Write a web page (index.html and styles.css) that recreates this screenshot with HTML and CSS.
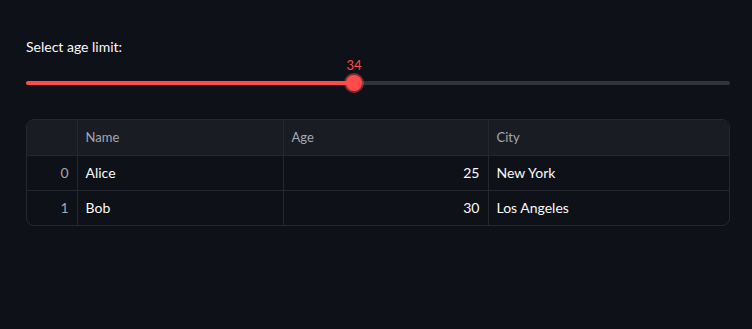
FILE: index.html
```html
<!DOCTYPE html>
<html lang="en">
<head>
    <meta charset="UTF-8">
    <meta name="viewport" content="width=device-width, initial-scale=1.0">
    <title>Age filter</title>
    <link rel="stylesheet" href="styles.css">
</head>
<body>
    <div class="main">
        <div class="slider-block">
            <label class="slider-label">Select age limit:</label>
            <div class="slider">
                <div class="track">
                    <div class="fill" style="width: 46.6%;">
                        <div class="thumb">
                            <span class="thumb-value">34</span>
                        </div>
                    </div>
                </div>
            </div>
        </div>

        <div class="table-wrap">
            <table class="data-table">
                <thead>
                    <tr>
                        <th class="idx"></th>
                        <th class="col-name">Name</th>
                        <th class="col-age">Age</th>
                        <th class="col-city">City</th>
                    </tr>
                </thead>
                <tbody>
                    <tr>
                        <td class="idx">0</td>
                        <td>Alice</td>
                        <td class="num">25</td>
                        <td>New York</td>
                    </tr>
                    <tr>
                        <td class="idx">1</td>
                        <td>Bob</td>
                        <td class="num">30</td>
                        <td>Los Angeles</td>
                    </tr>
                </tbody>
            </table>
        </div>
    </div>
</body>
</html>
```

FILE: styles.css
```css
* {
    box-sizing: border-box;
    margin: 0;
    padding: 0;
}

body {
    background-color: #0e1117;
    color: #fafafa;
    font-family: 'Lato', 'Noto Sans', sans-serif;
    height: 100vh;
}

.main {
    padding: 38px 22px 0 26px;
}

.slider-block {
    display: flex;
    flex-direction: column;
}

.slider-label {
    font-size: 14px;
    line-height: 18px;
    color: #fafafa;
    margin-bottom: 9px;
}

.slider {
    height: 27px;
    display: flex;
    align-items: flex-end;
    padding-bottom: 7px;
}

.track {
    width: 100%;
    height: 4px;
    border-radius: 2px;
    background-color: #31333f;
}

.fill {
    height: 100%;
    border-radius: 2px;
    background-color: #ff4b4b;
    position: relative;
}

.thumb {
    position: absolute;
    right: -8px;
    top: -6px;
    width: 16px;
    height: 16px;
    border-radius: 50%;
    background-color: #ff4b4b;
    box-shadow: 0 0 0 2px rgba(255, 75, 75, 0.45);
}

.thumb-value {
    position: absolute;
    bottom: 19px;
    left: 50%;
    transform: translateX(-50%);
    font-size: 13px;
    line-height: 14px;
    color: #ff4b4b;
}

.table-wrap {
    margin-top: 27px;
    border: 1px solid #262730;
    border-radius: 8px;
    overflow: hidden;
}

.data-table {
    width: 100%;
    border-collapse: collapse;
    table-layout: fixed;
    font-size: 14px;
}

.data-table th,
.data-table td {
    border-right: 1px solid #262730;
    border-bottom: 1px solid #262730;
    padding: 0 8px;
    text-align: left;
    white-space: nowrap;
}

.data-table th:last-child,
.data-table td:last-child {
    border-right: none;
}

.data-table tbody tr:last-child td {
    border-bottom: none;
}

.data-table th {
    height: 35px;
    background-color: #1a1c24;
    color: #a3a8b4;
    font-weight: 400;
    font-size: 13px;
}

.data-table td {
    height: 35px;
    color: #fafafa;
}

.data-table .idx {
    width: 50px;
    text-align: right;
    color: #a3a8b4;
}

.col-name {
    width: 206px;
}

.col-age {
    width: 205px;
}

.data-table .num {
    text-align: right;
}
```
